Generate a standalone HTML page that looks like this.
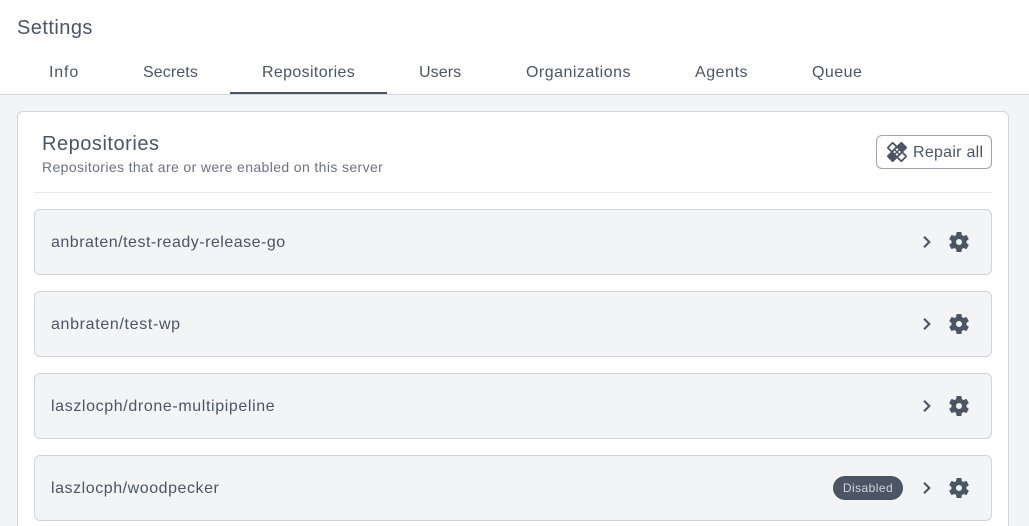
<!DOCTYPE html>
<html><head><meta charset="utf-8"><style>
*{box-sizing:border-box;margin:0;padding:0}
html,body{width:1029px;height:526px;overflow:hidden;background:#f3f4f6}
#root{position:relative;width:1029px;height:526px;overflow:hidden;background:#f3f4f6;font-family:"Liberation Sans",sans-serif;color:#4b5563}
.a{position:absolute;white-space:nowrap}
#hd{position:absolute;left:0;top:0;width:1029px;height:95px;background:#fff;border-bottom:1px solid #d1d5db}
#card{position:absolute;left:17px;top:111px;width:992px;height:430px;background:#fff;border:1px solid #d1d5db;border-radius:6px}
.row{position:absolute;left:34px;width:958px;height:66px;background:#f3f4f6;border:1px solid #d1d5db;border-radius:6px}
.t{font-size:16px;line-height:22px}
svg{position:absolute;fill:#4b5563}
</style></head><body><div id="root">
<svg width="0" height="0" style="left:0;top:0"><defs>
<symbol id="chev" viewBox="0 0 24 24"><path d="M8.3,16.5L12.8,12L8.3,7.5L9.8,6L15.8,12L9.8,18L8.3,16.5Z"/></symbol>
<symbol id="gear" viewBox="0 0 24 24"><path fill-rule="evenodd" d="M12,15A3,3 0 0,1 9,12A3,3 0 0,1 12,9A3,3 0 0,1 15,12A3,3 0 0,1 12,15M19.43,12.97C19.47,12.65 19.5,12.33 19.5,12C19.5,11.67 19.47,11.34 19.43,11L21.54,9.37C21.73,9.22 21.78,8.95 21.66,8.73L19.66,5.27C19.54,5.05 19.27,4.96 19.05,5.05L16.56,6.05C16.04,5.66 15.5,5.32 14.87,5.07L14.5,2.42C14.46,2.18 14.25,2 14,2H10C9.75,2 9.54,2.18 9.5,2.42L9.13,5.07C8.5,5.32 7.96,5.66 7.44,6.05L4.95,5.05C4.73,4.96 4.46,5.05 4.34,5.27L2.34,8.73C2.21,8.95 2.27,9.22 2.46,9.37L4.57,11C4.53,11.34 4.5,11.67 4.5,12C4.5,12.33 4.53,12.65 4.57,12.97L2.46,14.63C2.27,14.78 2.21,15.05 2.34,15.27L4.34,18.73C4.46,18.95 4.73,19.03 4.95,18.95L7.44,17.94C7.96,18.34 8.5,18.68 9.13,18.93L9.5,21.58C9.54,21.82 9.75,22 10,22H14C14.25,22 14.46,21.82 14.5,21.58L14.87,18.93C15.5,18.67 16.04,18.34 16.56,17.94L19.05,18.95C19.27,19.03 19.54,18.95 19.66,18.73L21.66,15.27C21.78,15.05 21.73,14.78 21.54,14.63L19.43,12.97Z"/></symbol>
</defs></svg>
<div id="hd"></div>
<div class="a" style="left:17px;top:14px;font-size:20px;line-height:28px;letter-spacing:.45px">Settings</div>
<div class="a t" style="left:49px;top:62px;letter-spacing:.85px">Info</div>
<div class="a t" style="left:143px;top:62px;letter-spacing:.1px">Secrets</div>
<div class="a t" style="left:262px;top:62px;letter-spacing:.35px">Repositories</div>
<div class="a t" style="left:419px;top:62px;letter-spacing:.1px">Users</div>
<div class="a t" style="left:526px;top:62px;letter-spacing:.48px">Organizations</div>
<div class="a t" style="left:695px;top:62px;letter-spacing:.55px">Agents</div>
<div class="a t" style="left:812px;top:62px;letter-spacing:.45px">Queue</div>
<div class="a" style="left:230px;top:92px;width:157px;height:2px;background:#4b5563"></div>
<div id="card"></div>
<div class="a" style="left:42px;top:130px;font-size:20px;line-height:28px;letter-spacing:.53px">Repositories</div>
<div class="a" style="left:42px;top:157px;font-size:14px;line-height:20px;color:#6b7280;letter-spacing:.38px">Repositories that are or were enabled on this server</div>
<div class="a" style="left:34px;top:192px;width:958px;height:1px;background:#e5e7eb"></div>
<div class="a" style="left:876px;top:135px;width:116px;height:34px;border:1px solid #9ca3af;border-radius:6px;background:#fff"></div>
<svg style="left:885px;top:140px" width="24" height="24" viewBox="0 0 24 24"><g transform="rotate(-45 12 12)"><rect x="1.5" y="7.65" width="21" height="8.7" rx="1.5"/><rect x="7.65" y="1.5" width="8.7" height="21" rx="1.5"/><rect x="9.4" y="3.2" width="5.2" height="4.2" fill="#fff"/><rect x="9.4" y="16.6" width="5.2" height="4.2" fill="#fff"/><rect x="9.3" y="9.3" width="2" height="2" fill="#fff"/><rect x="12.7" y="9.3" width="2" height="2" fill="#fff"/><rect x="9.3" y="12.7" width="2" height="2" fill="#fff"/><rect x="12.7" y="12.7" width="2" height="2" fill="#fff"/></g></svg>
<div class="a t" style="left:913px;top:142px;letter-spacing:.27px">Repair all</div>

<div class="row" style="top:209px"></div>
<div class="a t" style="left:51px;top:232px;letter-spacing:.5px">anbraten/test-ready-release-go</div>
<div class="row" style="top:291px"></div>
<div class="a t" style="left:51px;top:314px;letter-spacing:.66px">anbraten/test-wp</div>
<div class="row" style="top:373px"></div>
<div class="a t" style="left:51px;top:396px;letter-spacing:.62px">laszlocph/drone-multipipeline</div>
<div class="row" style="top:455px"></div>
<div class="a t" style="left:51px;top:478px;letter-spacing:.55px">laszlocph/woodpecker</div>
<div class="a" style="left:833px;top:476px;width:70px;height:24px;border-radius:12px;background:#4b5563;color:#d1d5db;font-size:12px;line-height:25px;text-align:center;letter-spacing:.45px">Disabled</div>

<svg style="left:915px;top:230px" width="24" height="24"><use href="#chev"/></svg>
<svg style="left:947px;top:230px" width="24" height="24"><use href="#gear"/></svg>
<svg style="left:915px;top:312px" width="24" height="24"><use href="#chev"/></svg>
<svg style="left:947px;top:312px" width="24" height="24"><use href="#gear"/></svg>
<svg style="left:915px;top:394px" width="24" height="24"><use href="#chev"/></svg>
<svg style="left:947px;top:394px" width="24" height="24"><use href="#gear"/></svg>
<svg style="left:915px;top:476px" width="24" height="24"><use href="#chev"/></svg>
<svg style="left:947px;top:476px" width="24" height="24"><use href="#gear"/></svg>
</div></body></html>
